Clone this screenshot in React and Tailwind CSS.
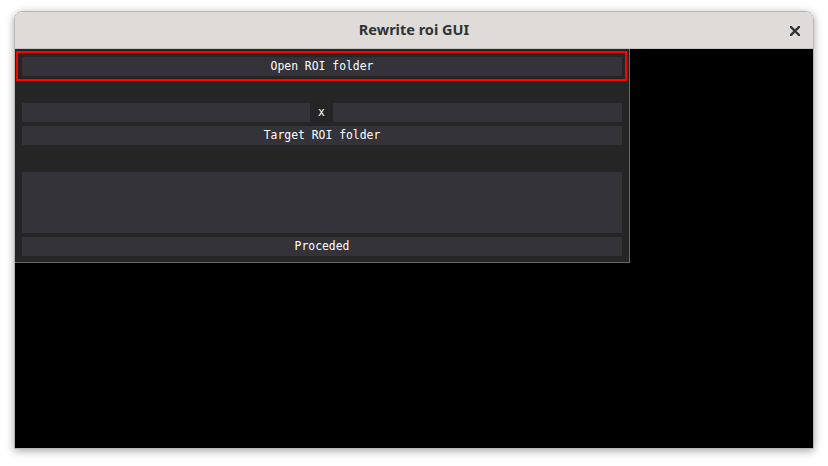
import React from "react";

const mono = { fontFamily: '"DejaVu Sans Mono", "Liberation Mono", monospace' };

const Btn = ({ label, className = "" }) => (
  <div
    className={`flex h-[19px] items-center justify-center bg-[#333339] pt-[1px] text-[11.4px] leading-none text-white ${className}`}
  >
    {label}
  </div>
);

const App = () => {
  return (
    <div className="h-[466px] w-[828px] bg-white pl-[14px] pt-[11px]">
      <div className="flex h-[438px] w-[800px] flex-col overflow-hidden rounded-t-[8px] border border-[#b9b7b4] shadow-[0_2px_8px_rgba(0,0,0,0.35)]">
        {/* title bar */}
        <div className="relative flex h-[37px] shrink-0 items-center justify-center border-b border-[#c6c3c0] bg-[#dedbd8]">
          <span
            className="text-[14.5px] font-bold text-[#2e3436]"
            style={{ fontFamily: '"Noto Sans", "Open Sans", sans-serif' }}
          >
            Rewrite roi GUI
          </span>
          <svg
            className="absolute right-[13px] top-[14px]"
            width="10"
            height="10"
            viewBox="0 0 10 10"
          >
            <path d="M1 1L9 9M9 1L1 9" stroke="#2e3436" strokeWidth="2.4" strokeLinecap="square" />
          </svg>
        </div>

        {/* gl area */}
        <div className="flex-1 bg-black">
          <div
            className="h-[214px] w-[615px] border-r border-b border-[#6a6a6a] bg-[#252525] pl-[1px] pt-[2px]"
            style={mono}
          >
            <div className="h-[30px] w-[611px] border-2 border-[#ff0000] pl-[4px] pt-[4px]">
              <Btn label="Open ROI folder" className="w-[600px]" />
            </div>

            <div className="ml-[6px] mt-[22px] flex w-[600px] flex-col">
              <div className="flex h-[19px] items-center">
                <div className="h-[19px] w-[288px] bg-[#333339]" />
                <div className="flex w-[23px] justify-center pt-[1px] text-[11.4px] leading-none text-white">x</div>
                <div className="h-[19px] w-[289px] bg-[#333339]" />
              </div>
              <Btn label="Target ROI folder" className="mt-[4px]" />
              <div className="mt-[27px] h-[61px] bg-[#333339]" />
              <Btn label="Proceded" className="mt-[4px]" />
            </div>
          </div>
        </div>
      </div>
    </div>
  );
};

export default App;
